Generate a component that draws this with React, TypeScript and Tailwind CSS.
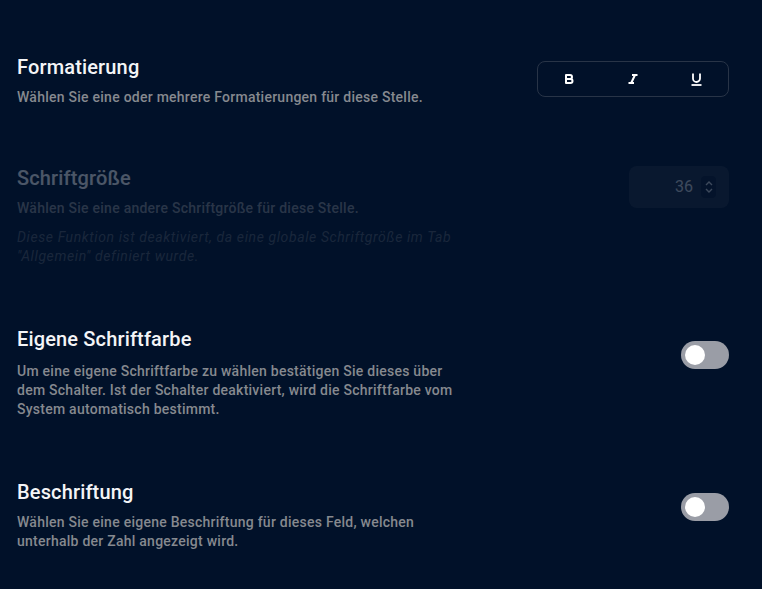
import React, { useState } from 'react';

const font = { fontFamily: 'Roboto, "Noto Sans", sans-serif' };

const Toggle: React.FC<{ on: boolean; onChange: (v: boolean) => void }> = ({ on, onChange }) => (
  <button
    type="button"
    onClick={() => onChange(!on)}
    className={`relative w-12 h-7 rounded-full flex items-center px-1 ${on ? 'bg-blue-600 justify-end' : 'bg-[#9a9da6] justify-start'}`}
  >
    <span className="block w-5 h-5 rounded-full bg-white" />
  </button>
);

const Section: React.FC<{
  title: string;
  children: React.ReactNode;
  control: React.ReactNode;
  disabled?: boolean;
  className?: string;
}> = ({ title, children, control, disabled, className = '' }) => (
  <div className={`flex justify-between items-start ${disabled ? 'opacity-30' : ''} ${className}`}>
    <div className="w-[456px]">
      <h2 className="text-[20px] leading-7 font-medium text-[#f4f5f7] tracking-[0.15px]">{title}</h2>
      {children}
    </div>
    {control}
  </div>
);

export default function App() {
  const [format, setFormat] = useState({ b: false, i: false, u: false });
  const [ownColor, setOwnColor] = useState(false);
  const [caption, setCaption] = useState(false);

  const desc = 'text-[14px] leading-[19px] font-medium text-[#86898f] tracking-[0.25px]';

  return (
    <div className="min-h-screen bg-[#011129] pl-[17px] pr-[33px] pt-[53px]" style={font}>
      <div className="flex flex-col gap-[57px]">
        <Section
          title="Formatierung"
          control={
            <div className="mt-2 w-[192px] h-[36px] grid grid-cols-3 border border-[#283447] rounded-lg text-white">
              <button type="button" onClick={() => setFormat(f => ({ ...f, b: !f.b }))} className="flex items-center justify-center">
                <svg width="9" height="10" viewBox="0 0 9 10" fill="none" stroke="white" strokeWidth="2">
                  <path d="M1 1h4a2 2 0 010 4H1zM1 5h4.5a2 2 0 010 4H1z" strokeLinejoin="round" />
                </svg>
              </button>
              <button type="button" onClick={() => setFormat(f => ({ ...f, i: !f.i }))} className="flex items-center justify-center">
                <svg width="10" height="10" viewBox="0 0 10 10" fill="none" stroke="white" strokeWidth="2">
                  <path d="M4 1h5.5M0.5 9H6M7 1L3.2 9" />
                </svg>
              </button>
              <button type="button" onClick={() => setFormat(f => ({ ...f, u: !f.u }))} className="flex items-center justify-center">
                <svg width="11" height="13" viewBox="0 0 11 13" fill="none" stroke="white" strokeWidth="1.8">
                  <path d="M2 0.5v5a3.5 3.5 0 007 0v-5" />
                  <path d="M0.5 12h10" />
                </svg>
              </button>
            </div>
          }
        >
          <p className={`${desc} mt-[7px]`}>Wählen Sie eine oder mehrere Formatierungen für diese Stelle.</p>
        </Section>

        <Section
          title="Schriftgröße"
          disabled
          control={
            <div className="mt-[2px] w-[100px] h-[42px] rounded-lg bg-[#1e2b3f] flex items-center justify-end pr-[13px] gap-[8px] text-[#c8ccd3] text-[16px]">
              <span>36</span>
              <span className="w-[15px] h-[22px] bg-[#0b1a30] rounded-sm flex items-center justify-center">
                <svg width="10" height="14" viewBox="0 0 10 14" fill="none" stroke="#c8ccd3" strokeWidth="1.4">
                  <path d="M2 5l3-3 3 3M2 9l3 3 3-3" />
                </svg>
              </span>
            </div>
          }
        >
          <p className={`${desc} mt-[7px]`}>Wählen Sie eine andere Schriftgröße für diese Stelle.</p>
          <p className="text-[14px] leading-[19px] text-[#86898f] tracking-[0.6px] italic mt-[10px] opacity-60">
            Diese Funktion ist deaktiviert, da eine globale Schriftgröße im Tab "Allgemein" definiert wurde.
          </p>
        </Section>

        <Section
          title="Eigene Schriftfarbe"
          className="mt-[2px]"
          control={<div className="mt-[16px]"><Toggle on={ownColor} onChange={setOwnColor} /></div>}
        >
          <p className={`${desc} mt-[9px]`}>
            Um eine eigene Schriftfarbe zu wählen bestätigen Sie dieses über dem Schalter. Ist der Schalter deaktiviert, wird die Schriftfarbe vom System automatisch bestimmt.
          </p>
        </Section>

        <Section
          title="Beschriftung"
          className="mt-[2px]"
          control={<div className="mt-[15px]"><Toggle on={caption} onChange={setCaption} /></div>}
        >
          <p className={`${desc} mt-[7px]`}>
            Wählen Sie eine eigene Beschriftung für dieses Feld, welchen unterhalb der Zahl angezeigt wird.
          </p>
        </Section>
      </div>
    </div>
  );
}
